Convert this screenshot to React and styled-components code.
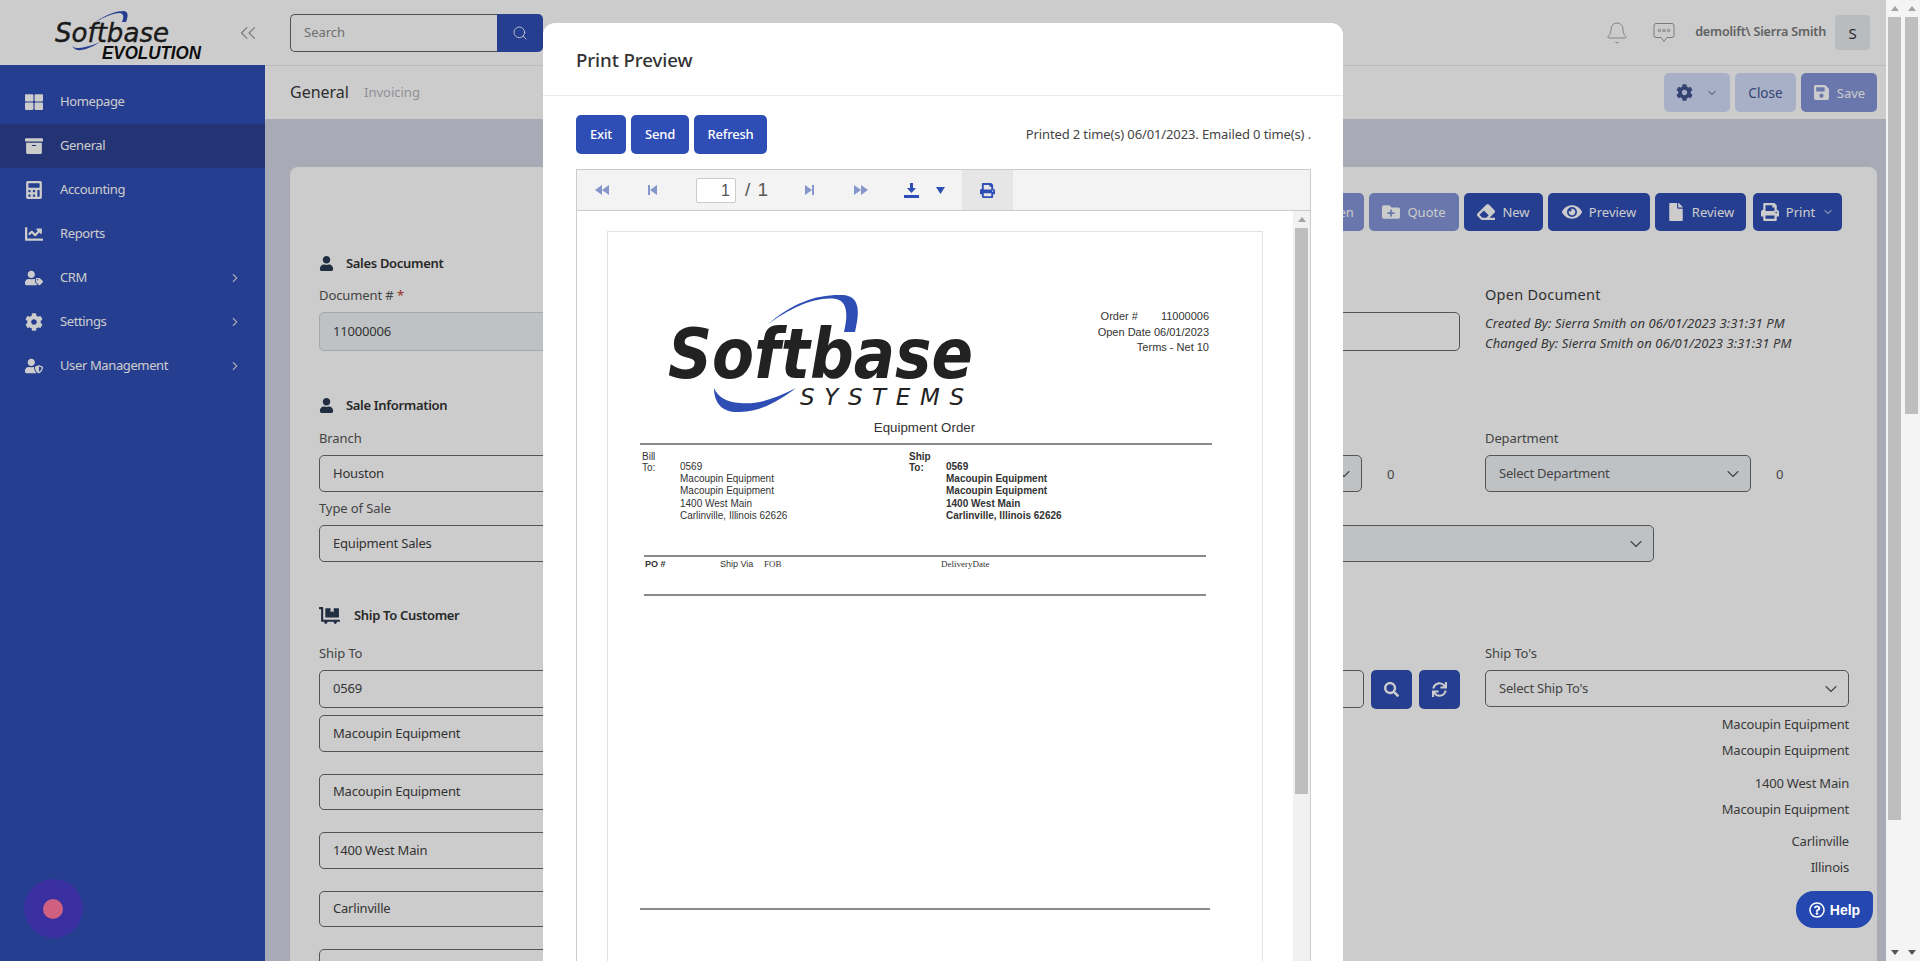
import React from "react";
import styled, { createGlobalStyle } from "styled-components";
import { FaThLarge, FaArchive, FaCalculator, FaChartLine, FaUserTag, FaCog, FaUserShield, FaUser, FaDollyFlatbed, FaFolderPlus, FaEraser, FaEye, FaFile, FaPrint, FaSave, FaSearch, FaSync, FaRegQuestionCircle } from "react-icons/fa";
import { Bell, ChevronDown, ChevronRight, ChevronsLeft, Search } from "lucide-react";

const UI = `"Noto Sans", "Open Sans", sans-serif`;
const DOC = `"Liberation Sans", Arial, sans-serif`;
const PRIMARY = "#2f4eb5";

const Global = createGlobalStyle`
  html, body { margin: 0; padding: 0; height: 961px; overflow: hidden; background: #fff; }
  * { box-sizing: border-box; }
  body { font-family: ${UI}; color: #3c3c3c; }
`;

const Screen = styled.div`display: flex; width: 1920px; height: 961px;`;
const AppFrame = styled.div`position: relative; flex: 1; min-width: 0; overflow: hidden; display: flex;`;
const Backdrop = styled.div`position: absolute; inset: 0; background: rgba(0,0,0,.2); z-index: 5;`;

/* window scrollbars */
const Bar = styled.div`width: ${p => p.$w}px; background: #f4f4f4; display: flex; flex-direction: column; align-items: center; padding: 0 2px; flex: none;`;
const ArrowCell = styled.div`height: 17px; flex: none; display: flex; align-items: center; justify-content: center;`;
const Tri = styled.span`
  width: 0; height: 0; border-left: 4px solid transparent; border-right: 4px solid transparent;
  ${p => p.$down ? "border-top: 5px solid #555;" : "border-bottom: 5px solid #a3a3a3;"}
`;
const Thumb = styled.div`width: 100%; height: ${p => p.$h}px; background: #bebebe; flex: none;`;
const Spacer = styled.div`flex: 1;`;
const Scrollbar = ({ w = 17, h }) => (
  <Bar $w={w}>
    <ArrowCell><Tri /></ArrowCell>
    <Thumb $h={h} />
    <Spacer />
    <ArrowCell><Tri $down /></ArrowCell>
  </Bar>
);

/* sidebar */
const Sidebar = styled.aside`width: 265px; flex: none; background: ${PRIMARY}; display: flex; flex-direction: column;`;
const LogoBar = styled.div`height: 65px; background: #fff; flex: none; display: flex; align-items: flex-start; padding: 11px 4px 0 55px; justify-content: space-between;`;
const Collapse = styled.span`display: flex; color: #9c9c9c; margin-top: 9px;`;
const Menu = styled.nav`padding-top: 15px;`;
const MenuItem = styled.div`
  height: 44px; display: flex; align-items: center; padding: 0 23px 0 25px; color: #fff; font-size: 13px; letter-spacing: -.38px;
  background: ${p => p.$active ? "#2c4090" : "transparent"};
`;
const MenuIcon = styled.span`width: 35px; flex: none; display: flex; font-size: 18px;`;
const MenuLabel = styled.span`flex: 1; padding-bottom: 2px;`;
const Bubble = styled.div`position: absolute; left: 24px; top: 879px; width: 59px; height: 59px; border-radius: 50%; background: #3a2fa0; z-index: 6; display: flex; align-items: center; justify-content: center;`;
const BubbleDot = styled.span`width: 20px; height: 20px; border-radius: 50%; background: #cf607f; position: relative; left: -1px;`;

/* main */
const Main = styled.div`flex: 1; min-width: 0; display: flex; flex-direction: column; background: #d3d5e3;`;
const TopBar = styled.header`height: 66px; flex: none; background: #fff; border-bottom: 1px solid #ececec; display: flex; align-items: center; padding: 0 16px 0 25px;`;
const SearchBox = styled.div`display: flex; width: 253px; height: 38px;`;
const SearchInput = styled.div`flex: 1; border: 1px solid #666; border-right: 0; border-radius: 5px 0 0 5px; color: #8a8a8a; font-size: 13px; display: flex; align-items: center; padding: 0 0 2px 13px; background: #fff;`;
const SearchBtn = styled.div`width: 46px; background: ${PRIMARY}; color: #fff; border-radius: 0 5px 5px 0; display: flex; align-items: center; justify-content: center;`;
const TopRight = styled.div`margin-left: auto; display: flex; align-items: center;`;
const TopIcon = styled.span`display: flex; color: #9a9a9a; margin-right: ${p => p.$mr}px;`;
const UserName = styled.span`font-size: 12.6px; font-weight: 600; color: #7a7a7a; margin-right: 9px; letter-spacing: -.2px; padding-bottom: 2px;`;
const Avatar = styled.span`width: 35px; height: 35px; border-radius: 4px; background: #e8ebef; display: flex; align-items: center; justify-content: center; font-size: 15px; color: #333;`;

const SubHeader = styled.div`height: 53px; flex: none; background: #fff; display: flex; align-items: center; padding: 0 9px 0 25px;`;
const Crumb = styled.span`font-size: 16px; color: #3a3a3a; margin-right: 15px; padding-bottom: 2px;`;
const CrumbLink = styled.span`font-size: 13px; color: #b4b6bd; padding-bottom: 2px;`;
const SubActions = styled.div`margin-left: auto; display: flex; gap: 5px;`;
const GhostBtn = styled.div`height: 39px; width: ${p => p.$w}px; border-radius: 5px; background: #d3dcf9; color: #40558f; font-size: 13.5px; display: flex; align-items: center; justify-content: center; gap: 13px;`;
const FadedBtn = styled.div`height: ${p => p.$h || 38}px; width: ${p => p.$w}px; border-radius: 5px; background: #8495d8; color: #fff; font-size: 13px; display: flex; align-items: center; justify-content: center; gap: 7px; flex: none;`;

const Content = styled.div`flex: 1; min-height: 0; padding: 48px 9px 0 25px; display: flex;`;
const Card = styled.section`flex: 1; background: #fff; border-radius: 8px 8px 0 0; padding: 26px 29px 0 29px; overflow: hidden;`;
const ActionBar = styled.div`display: flex; justify-content: flex-end; gap: 5px; margin-right: 6px;`;
const ActionBtn = styled.div`height: 38px; width: ${p => p.$w}px; border-radius: 5px; background: ${PRIMARY}; color: #fff; font-size: 13px; display: flex; align-items: center; justify-content: center; gap: 7px; margin-left: ${p => p.$ml || 0}px; flex: none;`;
const IconSize = styled.span`display: flex; font-size: ${p => p.$s || 16}px;`;

const Heading = styled.h3`
  margin: ${p => p.$mt}px 0 0; height: 20px; display: flex; align-items: center; gap: ${p => p.$gap || 12}px;
  font-size: 13px; font-weight: 600; color: #333; letter-spacing: -.32px;
  svg { color: #2a3a52; font-size: ${p => p.$is || 15}px; }
`;
const Columns = styled.div`display: grid; grid-template-columns: 560px 556px 364px; column-gap: 25px; margin-top: ${p => p.$mt || 0}px;`;
const Col = styled.div`min-width: 0; display: flex; flex-direction: column;`;
const WideCol = styled(Col)`grid-column: 2 / span 2; padding-right: 195px;`;
const Label = styled.label`font-size: 13px; line-height: 20px; color: #555; margin-bottom: 7px; letter-spacing: -.1px;`;
const Star = styled.span`color: #c0392b;`;
const Input = styled.div`
  height: ${p => p.$h || 38}px; border: 1px solid ${p => p.$filled ? "#cfd3d7" : "#6a6a6a"}; border-radius: 5px; flex: none;
  background: ${p => p.$filled ? "#eff3f7" : "#fff"}; display: flex; align-items: center; padding: 0 13px 2px; font-size: 13px; color: #3f3f3f; letter-spacing: -.2px;
  margin-top: ${p => p.$mt || 0}px;
`;
const Select = styled(Input)`justify-content: space-between; border-color: #6a6a6a; color: #555; padding-right: 7px; flex: ${p => p.$grow ? 1 : "none"}; width: ${p => p.$w ? p.$w + "px" : "auto"}; svg { position: relative; top: 1px; }`;
const SelectRow = styled.div`display: flex; align-items: center; gap: ${p => p.$gap || 25}px;`;
const Count = styled.span`font-size: 13px; color: #555;`;
const GrowInput = styled(Input)`flex: 1;`;
const SquareBtn = styled.div`width: 41px; height: 39px; flex: none; background: ${PRIMARY}; border-radius: 5px; color: #fff; display: flex; align-items: center; justify-content: center; font-size: 15px;`;
const ButtonsRow = styled.div`display: flex; gap: 7px; margin-right: 0;`;
const OpenTitle = styled.div`font-size: 14.5px; line-height: 20px; color: #3c3c3c; letter-spacing: .25px; margin: -1px 0 9px;`;
const Audit = styled.div`font-size: 13px; line-height: 20px; font-style: italic; color: #444; letter-spacing: .1px;`;
const RightText = styled.div`font-size: 13px; line-height: 26px; color: #4a4a4a; text-align: right; letter-spacing: -.2px; margin-top: ${p => p.$mt || 0}px;`;

const HelpButton = styled.div`position: absolute; left: 1796px; top: 891px; width: 77px; height: 37px; z-index: 6; background: #2447b0; color: #fff; border-radius: 18px 5px 18px 18px; display: flex; align-items: center; justify-content: center; gap: 5px; font: 700 14px ${DOC};`;

/* modal */
const Modal = styled.div`position: absolute; left: 543px; top: 23px; width: 800px; height: 1000px; background: #fff; border-radius: 12px 12px 0 0; z-index: 10; display: flex; flex-direction: column;`;
const ModalHead = styled.div`height: 73px; flex: none; border-bottom: 1px solid #e9e9e9; display: flex; align-items: center; padding: 0 33px;`;
const ModalTitle = styled.h2`margin: 0; font-size: 18.7px; font-weight: 500; color: #333; letter-spacing: -.1px;`;
const ModalBody = styled.div`flex: 1; padding: 19px 32px 0 33px; display: flex; flex-direction: column; min-height: 0;`;
const ModalActions = styled.div`display: flex; align-items: center; gap: 5px; height: 39px; flex: none;`;
const ModalBtn = styled.div`height: 39px; width: ${p => p.$w}px; background: ${PRIMARY}; color: #fff; border-radius: 5px; font-size: 13px; font-weight: 500; display: flex; align-items: center; justify-content: center; letter-spacing: -.2px; padding-bottom: 2px;`;
const PrintInfo = styled.span`margin-left: auto; font-size: 13px; color: #444; letter-spacing: -.12px; padding-bottom: 2px;`;

const Viewer = styled.div`margin-top: 15px; border: 1px solid #ccc; border-bottom: 0; width: 735px; flex: 1; min-height: 0; display: flex; flex-direction: column; overflow: hidden;`;
const ViewerBar = styled.div`height: 41px; flex: none; background: #f3f3f3; border-bottom: 1px solid #ccc; display: flex; align-items: stretch;`;
const ToolBtn = styled.div`width: ${p => p.$w || 51}px; flex: none; display: flex; align-items: center; justify-content: center; background: ${p => p.$active ? "#e6e6e6" : "transparent"}; margin-left: ${p => p.$ml || 0}px;`;
const PageBox = styled.div`width: 40px; height: 25px; align-self: center; border: 1px solid #ccc; background: #fff; border-radius: 2px; margin-left: 18px; font: 16px ${DOC}; color: #555; text-align: right; padding-right: 5px; line-height: 24px; flex: none;`;
const PageTotal = styled.span`align-self: center; font: 19px ${DOC}; color: #555; margin-left: 9px; word-spacing: 2px; width: 39px; flex: none;`;
const ViewerMain = styled.div`flex: 1; min-height: 0; display: flex;`;
const PageArea = styled.div`flex: 1; min-width: 0; padding: 20px 0 0 30px; overflow: hidden;`;
const InnerBar = styled(Bar)`background: #f1f1f1;`;

const Paper = styled.div`width: 656px; height: 760px; border: 1px solid #e2e2e2; font-family: ${DOC}; color: #333; font-size: 10px; background: #fff;`;
const PaperTop = styled.div`display: flex; justify-content: space-between; padding: 62px 53px 0 60px; height: 187px;`;
const OrderInfo = styled.div`font-size: 11px; line-height: 15.5px; text-align: right; padding-top: 15px; color: #333;`;
const OrderNum = styled.span`margin-left: 23px;`;
const DocTitle = styled.div`font-size: 13.3px; line-height: 16px; text-align: center; padding-right: 21px; margin-top: 1px; color: #333;`;
const Rule = styled.div`height: 2px; background: #8a8a8a; margin: ${p => p.$mt}px ${p => p.$r}px 0 ${p => p.$l}px;`;
const AddressRow = styled.div`display: grid; grid-template-columns: 267px 1fr; padding-left: 34px; margin-top: 5px;`;
const Address = styled.div`display: grid; grid-template-columns: ${p => p.$c}px 1fr; font-weight: ${p => p.$bold ? 700 : 400};`;
const BillLabel = styled.div`line-height: 11px; padding-top: 1px;`;
const AddrLines = styled.div`line-height: 12.2px; padding-top: 11px;`;
const PoRow = styled.div`display: flex; height: 37px; padding: 1px 0 0 37px; font-size: 9px; line-height: 12px;`;
const PoCell = styled.span`width: ${p => p.$w}px; flex: none; font-weight: ${p => p.$bold ? 700 : 400}; font-family: ${p => p.$serif ? `"Liberation Serif", serif` : "inherit"};`;

const SvgIcon = styled.svg`display: block; overflow: visible;`;

const SidebarLogo = () => (
  <SvgIcon width="146" height="49" viewBox="0 0 146 49">
    <path d="M40 11 C52 3 62 0 69 0 C74 1 73 6 71 11 L67 11 C69 6 69 3 65 2 C58 2 50 6 40 11Z" fill="#2f4eb5" />
    <path d="M17 34 C19 40 25 40 31 38 C36 36 41 34 45 31 C36 35 27 37 22 37 C19 37 18 36 17 34Z" fill="#2f4eb5" />
    <text x="0" y="31" fontFamily="DejaVu Sans, sans-serif" fontStyle="italic" fontSize="27" fill="#222" stroke="#222" strokeWidth=".4" textLength="114" lengthAdjust="spacingAndGlyphs">Softbase</text>
    <text x="47" y="48" fontFamily="Liberation Sans, sans-serif" fontStyle="italic" fontWeight="700" fontSize="19" fill="#111" textLength="99" lengthAdjust="spacingAndGlyphs">EVOLUTION</text>
  </SvgIcon>
);

const PaperLogo = () => (
  <SvgIcon width="306" height="120" viewBox="0 0 306 120">
    <path d="M99 31 C125 8 150 0 175 1 C190 2 193 14 187 38 L176 38 C181 18 178 7 168 5 C148 2 122 14 99 31Z" fill="#2f4eb5" />
    <path d="M46 94 C46 110 55 119 72 118 C95 117 112 106 128 94 C108 104 90 111 72 109 C58 108 50 103 46 94Z" fill="#2f4eb5" />
    <text x="0" y="84" fontFamily="DejaVu Sans, sans-serif" fontStyle="italic" fontWeight="700" fontSize="70" fill="#222" textLength="305" lengthAdjust="spacingAndGlyphs">Softbase</text>
    <text x="132" y="111" fontFamily="DejaVu Sans, sans-serif" fontStyle="italic" fontSize="23" fill="#222" textLength="164" lengthAdjust="spacing">SYSTEMS</text>
  </SvgIcon>
);

const ChatIcon = () => (
  <SvgIcon width="22" height="21" viewBox="0 0 22 21" fill="none" stroke="currentColor" strokeWidth="1">
    <path d="M3 1.5h16a2 2 0 0 1 2 2v10a2 2 0 0 1-2 2h-5l-3 4-3-4H3a2 2 0 0 1-2-2v-10a2 2 0 0 1 2-2Z" />
    <circle cx="6.5" cy="8.5" r="1.2" /><circle cx="11" cy="8.5" r="1.2" /><circle cx="15.5" cy="8.5" r="1.2" />
  </SvgIcon>
);

const TOOL = "#8496cc";
const First = () => <SvgIcon width="14" height="10" viewBox="0 0 14 10" fill={TOOL}><path d="M7 0v10L0 5zM14 0v10L7 5z" /></SvgIcon>;
const Prev = () => <SvgIcon width="9" height="10" viewBox="0 0 9 10" fill={TOOL}><path d="M0 0h2v10H0zM9 0v10L2 5z" /></SvgIcon>;
const Next = () => <SvgIcon width="9" height="10" viewBox="0 0 9 10" fill={TOOL}><path d="M0 0v10l7-5zM7 0h2v10H7z" /></SvgIcon>;
const Last = () => <SvgIcon width="14" height="10" viewBox="0 0 14 10" fill={TOOL}><path d="M0 0v10l7-5zM7 0v10l7-5z" /></SvgIcon>;
const Download = () => <SvgIcon width="15" height="15" viewBox="0 0 15 15" fill="#2f4eb5"><path d="M6 0h3v5h3L7.5 10 3 5h3zM0 12h15v3H0z" /></SvgIcon>;
const Caret = () => <SvgIcon width="9" height="7" viewBox="0 0 9 7" fill="#2f4eb5"><path d="M0 0h9L4.5 7z" /></SvgIcon>;

const menu = [
  [FaThLarge, "Homepage"], [FaArchive, "General", true], [FaCalculator, "Accounting"], [FaChartLine, "Reports"],
  [FaUserTag, "CRM", false, true], [FaCog, "Settings", false, true], [FaUserShield, "User Management", false, true],
];

export default function App() {
  return (
    <>
      <Global />
      <Screen>
        <AppFrame>
          <Sidebar>
            <LogoBar>
              <SidebarLogo />
              <Collapse><ChevronsLeft size={26} strokeWidth={1.1} /></Collapse>
            </LogoBar>
            <Menu>
              {menu.map(([Icon, label, active, more]) => (
                <MenuItem key={label} $active={active}>
                  <MenuIcon><Icon /></MenuIcon>
                  <MenuLabel>{label}</MenuLabel>
                  {more && <ChevronRight size={14} color="#c8cfe6" />}
                </MenuItem>
              ))}
            </Menu>
          </Sidebar>
          <Main>
            <TopBar>
              <SearchBox>
                <SearchInput>Search</SearchInput>
                <SearchBtn><Search size={16} strokeWidth={1.3} /></SearchBtn>
              </SearchBox>
              <TopRight>
                <TopIcon $mr={24}><Bell size={24} strokeWidth={.9} /></TopIcon>
                <TopIcon $mr={20}><ChatIcon /></TopIcon>
                <UserName>demolift\ Sierra Smith</UserName>
                <Avatar>S</Avatar>
              </TopRight>
            </TopBar>
            <SubHeader>
              <Crumb>General</Crumb>
              <CrumbLink>Invoicing</CrumbLink>
              <SubActions>
                <GhostBtn $w={66}><IconSize $s={17}><FaCog /></IconSize><ChevronDown size={12} /></GhostBtn>
                <GhostBtn $w={61}>Close</GhostBtn>
                <FadedBtn $h={39} $w={76}><IconSize $s={17}><FaSave /></IconSize>Save</FadedBtn>
              </SubActions>
            </SubHeader>
            <Content>
              <Card>
                <ActionBar>
                  <FadedBtn $w={90}><IconSize><FaFolderPlus /></IconSize>Reopen</FadedBtn>
                  <FadedBtn $w={90}><IconSize $s={18}><FaFolderPlus /></IconSize>Quote</FadedBtn>
                  <ActionBtn $w={79}><IconSize $s={18}><FaEraser /></IconSize>New</ActionBtn>
                  <ActionBtn $w={102}><IconSize $s={20}><FaEye /></IconSize>Preview</ActionBtn>
                  <ActionBtn $w={91}><IconSize $s={18}><FaFile /></IconSize>Review</ActionBtn>
                  <ActionBtn $w={89} $ml={2}><IconSize $s={18}><FaPrint /></IconSize>Print<ChevronDown size={12} /></ActionBtn>
                </ActionBar>

                <Heading $mt={22}><FaUser />Sales Document</Heading>
                <Columns $mt={12}>
                  <Col>
                    <Label>Document # <Star>*</Star></Label>
                    <Input $h={39} $filled>11000006</Input>
                  </Col>
                  <Col>
                    <Label>&nbsp;</Label>
                    <Input $h={39} />
                  </Col>
                  <Col>
                    <OpenTitle>Open Document</OpenTitle>
                    <Audit>Created By: Sierra Smith on 06/01/2023 3:31:31 PM</Audit>
                    <Audit>Changed By: Sierra Smith on 06/01/2023 3:31:31 PM</Audit>
                  </Col>
                </Columns>

                <Heading $mt={42}><FaUser />Sale Information</Heading>
                <Columns $mt={13}>
                  <Col>
                    <Label>Branch</Label>
                    <Input $h={37}>Houston</Input>
                  </Col>
                  <Col>
                    <Label>&nbsp;</Label>
                    <SelectRow>
                      <Select $h={37} $filled $w={458}><span /><ChevronDown size={20} strokeWidth={1.3} /></Select>
                      <Count>0</Count>
                    </SelectRow>
                  </Col>
                  <Col>
                    <Label>Department</Label>
                    <SelectRow>
                      <Select $h={37} $filled $w={266}>Select Department<ChevronDown size={20} strokeWidth={1.3} /></Select>
                      <Count>0</Count>
                    </SelectRow>
                  </Col>
                </Columns>
                <Columns $mt={6}>
                  <Col>
                    <Label>Type of Sale</Label>
                    <Input $h={37}>Equipment Sales</Input>
                  </Col>
                  <WideCol>
                    <Label>&nbsp;</Label>
                    <Select $h={37} $filled><span /><ChevronDown size={20} strokeWidth={1.3} /></Select>
                  </WideCol>
                </Columns>

                <Heading $mt={43} $gap={14} $is={21}><FaDollyFlatbed />Ship To Customer</Heading>
                <Columns $mt={18}>
                  <Col>
                    <Label>Ship To</Label>
                    <Input>0569</Input>
                    <Input $h={37} $mt={7}>Macoupin Equipment</Input>
                    <Input $h={36} $mt={22}>Macoupin Equipment</Input>
                    <Input $h={37} $mt={22}>1400 West Main</Input>
                    <Input $h={36} $mt={22}>Carlinville</Input>
                    <Input $h={37} $mt={22} />
                  </Col>
                  <Col>
                    <Label>&nbsp;</Label>
                    <ButtonsRow>
                      <GrowInput />
                      <SquareBtn><FaSearch /></SquareBtn>
                      <SquareBtn><FaSync /></SquareBtn>
                    </ButtonsRow>
                  </Col>
                  <Col>
                    <Label>Ship To's</Label>
                    <Select $h={37}>Select Ship To's<ChevronDown size={20} strokeWidth={1.3} /></Select>
                    <RightText $mt={4}>Macoupin Equipment</RightText>
                    <RightText>Macoupin Equipment</RightText>
                    <RightText $mt={7}>1400 West Main</RightText>
                    <RightText>Macoupin Equipment</RightText>
                    <RightText $mt={6}>Carlinville</RightText>
                    <RightText>Illinois</RightText>
                  </Col>
                </Columns>
              </Card>
            </Content>
          </Main>

          <Backdrop />
          <Bubble><BubbleDot /></Bubble>
          <HelpButton><FaRegQuestionCircle size={16} />Help</HelpButton>

          <Modal>
            <ModalHead><ModalTitle>Print Preview</ModalTitle></ModalHead>
            <ModalBody>
              <ModalActions>
                <ModalBtn $w={50}>Exit</ModalBtn>
                <ModalBtn $w={58}>Send</ModalBtn>
                <ModalBtn $w={73}>Refresh</ModalBtn>
                <PrintInfo>Printed 2 time(s) 06/01/2023. Emailed 0 time(s) .</PrintInfo>
              </ModalActions>
              <Viewer>
                <ViewerBar>
                  <ToolBtn $w={50}><First /></ToolBtn>
                  <ToolBtn><Prev /></ToolBtn>
                  <PageBox>1</PageBox>
                  <PageTotal>/ 1</PageTotal>
                  <ToolBtn><Next /></ToolBtn>
                  <ToolBtn><Last /></ToolBtn>
                  <ToolBtn $w={50}><Download /></ToolBtn>
                  <ToolBtn $w={9}><Caret /></ToolBtn>
                  <ToolBtn $ml={17} $active><IconSize $s={15}><FaPrint color="#2f4eb5" /></IconSize></ToolBtn>
                </ViewerBar>
                <ViewerMain>
                  <PageArea>
                    <Paper>
                      <PaperTop>
                        <PaperLogo />
                        <OrderInfo>
                          <div>Order #<OrderNum>11000006</OrderNum></div>
                          <div>Open Date 06/01/2023</div>
                          <div>Terms - Net 10</div>
                        </OrderInfo>
                      </PaperTop>
                      <DocTitle>Equipment Order</DocTitle>
                      <Rule $mt={7} $l={32} $r={50} />
                      <AddressRow>
                        <Address $c={38}>
                          <BillLabel>Bill<br />To:</BillLabel>
                          <AddrLines>
                            <div>0569</div>
                            <div>Macoupin Equipment</div>
                            <div>Macoupin Equipment</div>
                            <div>1400 West Main</div>
                            <div>Carlinville, Illinois 62626</div>
                          </AddrLines>
                        </Address>
                        <Address $c={37} $bold>
                          <BillLabel>Ship<br />To:</BillLabel>
                          <AddrLines>
                            <div>0569</div>
                            <div>Macoupin Equipment</div>
                            <div>Macoupin Equipment</div>
                            <div>1400 West Main</div>
                            <div>Carlinville, Illinois 62626</div>
                          </AddrLines>
                        </Address>
                      </AddressRow>
                      <Rule $mt={33} $l={36} $r={56} />
                      <PoRow>
                        <PoCell $w={75} $bold>PO #</PoCell>
                        <PoCell $w={44}>Ship Via</PoCell>
                        <PoCell $w={177} $serif>FOB</PoCell>
                        <PoCell $w={80} $serif>DeliveryDate</PoCell>
                      </PoRow>
                      <Rule $mt={0} $l={36} $r={56} />
                      <Rule $mt={312} $l={32} $r={52} />
                    </Paper>
                  </PageArea>
                  <InnerBar $w={17}>
                    <ArrowCell><Tri /></ArrowCell>
                    <Thumb $h={566} />
                    <Spacer />
                    <ArrowCell><Tri $down /></ArrowCell>
                  </InnerBar>
                </ViewerMain>
              </Viewer>
            </ModalBody>
          </Modal>
        </AppFrame>
        <Scrollbar h={803} />
        <Scrollbar h={397} />
      </Screen>
    </>
  );
}
